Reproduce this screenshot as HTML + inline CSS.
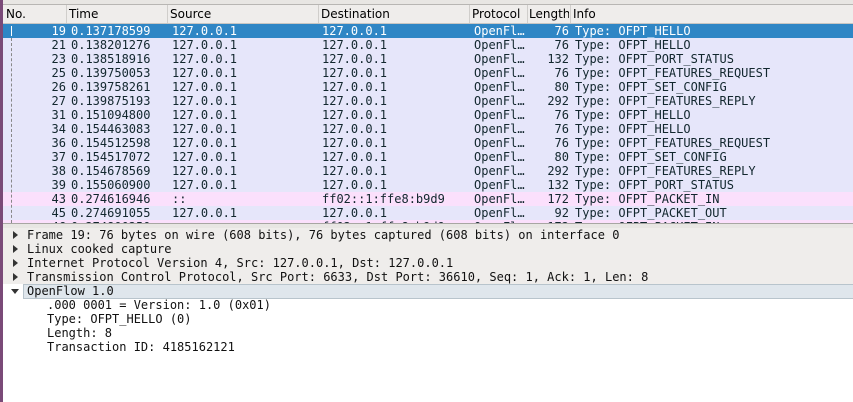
<!DOCTYPE html>
<html><head><style>
body{margin:0;width:853px;height:402px;overflow:hidden;background:#fff;font-family:"DejaVu Sans Mono","Liberation Mono",monospace;font-size:12px;position:relative}
.strip{position:absolute;left:0;top:0;width:3px;height:402px;background:#7a4a78}
.top{position:absolute;left:3px;top:0;right:0;height:4px;background:#e8e6e3;border-bottom:1px solid #b8b6b3}
.hdr{position:absolute;left:3px;top:5px;right:0;height:18px;background:#efedeb;border-bottom:1px solid #c8c6c3;font-family:"DejaVu Sans","Liberation Sans",sans-serif;font-size:12px}
.hdr span{position:absolute;top:2px}
.sep{position:absolute;top:0;height:18px;width:1px;background:#d0cecb}
.list{position:absolute;left:3px;top:24px;right:0;height:199px;overflow:hidden;background:#fff}
.row{position:absolute;left:0;right:0;height:14px;line-height:14px;background:#e6e6fa;color:#12272e;white-space:pre}
.row.sel{background:#2f86c5;color:#fff}
.row.pk{background:#fbe0fc}
.row span{position:absolute;top:0}
.c0{right:787px;text-align:right}
.c1{left:68px}.c2{left:169px}.c3{left:319px}.c4{left:471px}.c5{right:284px;text-align:right}.c6{left:572px}
.dash{position:absolute;left:8px;top:14px;height:190px;border-left:1px dashed #888}
.split{position:absolute;left:3px;top:223px;right:0;height:4px;background:#e8e6e3;border-top:1px solid #a8a6a3}
.det{position:absolute;left:3px;top:228px;right:0;bottom:0;background:#fff}
.d{position:absolute;left:0;right:0;height:14px;line-height:14px;color:#111;white-space:pre}
.g{background:#efedeb}
.d .t{position:absolute;left:24px}
.d .k{position:absolute;left:44px}
.tri{position:absolute;left:10px;top:3px;width:0;height:0;border-left:5px solid #333;border-top:4px solid transparent;border-bottom:4px solid transparent}
.trd{position:absolute;left:8px;top:5px;width:0;height:0;border-top:5px solid #333;border-left:4px solid transparent;border-right:4px solid transparent}
.of{position:absolute;left:20px;right:0;top:0;height:13px;background:#dfe6ec;border:1px solid #b8c4cc;border-right:none}
</style></head><body>
<div class="strip"></div>
<div class="top"></div>
<div class="hdr">
<span style="left:3px">No.</span>
<div class="sep" style="left:63px"></div><span style="left:66px">Time</span>
<div class="sep" style="left:164px"></div><span style="left:167px">Source</span>
<div class="sep" style="left:315px"></div><span style="left:318px">Destination</span>
<div class="sep" style="left:466px"></div><span style="left:469px">Protocol</span>
<div class="sep" style="left:524px"></div><span style="left:526px;width:40px;overflow:hidden;white-space:nowrap">Length</span>
<div class="sep" style="left:567px"></div><span style="left:570px">Info</span>
</div>
<div class="list">
<div class="row sel" style="top:0"><span class="c0">19</span><span class="c1">0.137178599</span><span class="c2">127.0.0.1</span><span class="c3">127.0.0.1</span><span class="c4">OpenFl…</span><span class="c5">76</span><span class="c6">Type: OFPT_HELLO</span></div>
<div class="row" style="top:14px"><span class="c0">21</span><span class="c1">0.138201276</span><span class="c2">127.0.0.1</span><span class="c3">127.0.0.1</span><span class="c4">OpenFl…</span><span class="c5">76</span><span class="c6">Type: OFPT_HELLO</span></div>
<div class="row" style="top:28px"><span class="c0">23</span><span class="c1">0.138518916</span><span class="c2">127.0.0.1</span><span class="c3">127.0.0.1</span><span class="c4">OpenFl…</span><span class="c5">132</span><span class="c6">Type: OFPT_PORT_STATUS</span></div>
<div class="row" style="top:42px"><span class="c0">25</span><span class="c1">0.139750053</span><span class="c2">127.0.0.1</span><span class="c3">127.0.0.1</span><span class="c4">OpenFl…</span><span class="c5">76</span><span class="c6">Type: OFPT_FEATURES_REQUEST</span></div>
<div class="row" style="top:56px"><span class="c0">26</span><span class="c1">0.139758261</span><span class="c2">127.0.0.1</span><span class="c3">127.0.0.1</span><span class="c4">OpenFl…</span><span class="c5">80</span><span class="c6">Type: OFPT_SET_CONFIG</span></div>
<div class="row" style="top:70px"><span class="c0">27</span><span class="c1">0.139875193</span><span class="c2">127.0.0.1</span><span class="c3">127.0.0.1</span><span class="c4">OpenFl…</span><span class="c5">292</span><span class="c6">Type: OFPT_FEATURES_REPLY</span></div>
<div class="row" style="top:84px"><span class="c0">31</span><span class="c1">0.151094800</span><span class="c2">127.0.0.1</span><span class="c3">127.0.0.1</span><span class="c4">OpenFl…</span><span class="c5">76</span><span class="c6">Type: OFPT_HELLO</span></div>
<div class="row" style="top:98px"><span class="c0">34</span><span class="c1">0.154463083</span><span class="c2">127.0.0.1</span><span class="c3">127.0.0.1</span><span class="c4">OpenFl…</span><span class="c5">76</span><span class="c6">Type: OFPT_HELLO</span></div>
<div class="row" style="top:112px"><span class="c0">36</span><span class="c1">0.154512598</span><span class="c2">127.0.0.1</span><span class="c3">127.0.0.1</span><span class="c4">OpenFl…</span><span class="c5">76</span><span class="c6">Type: OFPT_FEATURES_REQUEST</span></div>
<div class="row" style="top:126px"><span class="c0">37</span><span class="c1">0.154517072</span><span class="c2">127.0.0.1</span><span class="c3">127.0.0.1</span><span class="c4">OpenFl…</span><span class="c5">80</span><span class="c6">Type: OFPT_SET_CONFIG</span></div>
<div class="row" style="top:140px"><span class="c0">38</span><span class="c1">0.154678569</span><span class="c2">127.0.0.1</span><span class="c3">127.0.0.1</span><span class="c4">OpenFl…</span><span class="c5">292</span><span class="c6">Type: OFPT_FEATURES_REPLY</span></div>
<div class="row" style="top:154px"><span class="c0">39</span><span class="c1">0.155060900</span><span class="c2">127.0.0.1</span><span class="c3">127.0.0.1</span><span class="c4">OpenFl…</span><span class="c5">132</span><span class="c6">Type: OFPT_PORT_STATUS</span></div>
<div class="row pk" style="top:168px"><span class="c0">43</span><span class="c1">0.274616946</span><span class="c2">::</span><span class="c3">ff02::1:ffe8:b9d9</span><span class="c4">OpenFl…</span><span class="c5">172</span><span class="c6">Type: OFPT_PACKET_IN</span></div>
<div class="row" style="top:182px"><span class="c0">45</span><span class="c1">0.274691055</span><span class="c2">127.0.0.1</span><span class="c3">127.0.0.1</span><span class="c4">OpenFl…</span><span class="c5">92</span><span class="c6">Type: OFPT_PACKET_OUT</span></div>
<div class="row pk" style="top:196px"><span class="c0">46</span><span class="c1">0.274800250</span><span class="c2">::</span><span class="c3">ff02::1:ffe8:b9d9</span><span class="c4">OpenFl…</span><span class="c5">172</span><span class="c6">Type: OFPT_PACKET_IN</span></div>
<div class="dash"></div>
<div style="position:absolute;left:8px;top:2px;width:1px;height:10px;background:#fff"></div>
</div>
<div class="split"></div>
<div class="det">
<div class="d g" style="top:0"><div class="tri"></div><span class="t">Frame 19: 76 bytes on wire (608 bits), 76 bytes captured (608 bits) on interface 0</span></div>
<div class="d g" style="top:14px"><div class="tri"></div><span class="t">Linux cooked capture</span></div>
<div class="d g" style="top:28px"><div class="tri"></div><span class="t">Internet Protocol Version 4, Src: 127.0.0.1, Dst: 127.0.0.1</span></div>
<div class="d g" style="top:42px"><div class="tri"></div><span class="t">Transmission Control Protocol, Src Port: 6633, Dst Port: 36610, Seq: 1, Ack: 1, Len: 8</span></div>
<div class="d" style="top:56px"><div class="of"></div><div class="trd"></div><span class="t">OpenFlow 1.0</span></div>
<div class="d" style="top:70px"><span class="k">.000 0001 = Version: 1.0 (0x01)</span></div>
<div class="d" style="top:84px"><span class="k">Type: OFPT_HELLO (0)</span></div>
<div class="d" style="top:98px"><span class="k">Length: 8</span></div>
<div class="d" style="top:112px"><span class="k">Transaction ID: 4185162121</span></div>
</div>
</body></html>
